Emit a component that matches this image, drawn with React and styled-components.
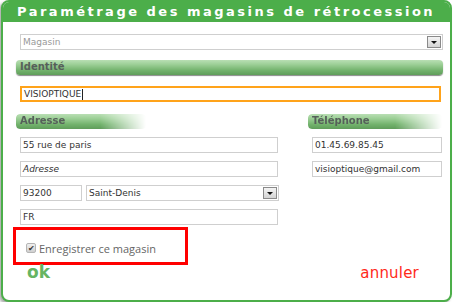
import React from "react";
import styled, { createGlobalStyle } from "styled-components";

const Global = createGlobalStyle`
  body {
    margin: 0;
    background: #fff;
    font-family: "DejaVu Sans", Verdana, sans-serif;
  }
`;

const Panel = styled.div`
  box-sizing: border-box;
  margin-left: 1px;
  width: 451px;
  height: 302px;
  border: 2px solid #4cae4a;
  border-radius: 8px;
  background: #fff;
  box-shadow: -2px 2px 3px #aaa;
  overflow: hidden;
`;

const Header = styled.div`
  height: 20px;
  background: #4cae4a;
  color: #fff;
  font-weight: bold;
  font-size: 13px;
  letter-spacing: 2.5px;
  line-height: 20px;
  padding-left: 14px;
  white-space: nowrap;
`;

const Body = styled.div`
  padding: 12px 8px 0 13px;
  display: flex;
  flex-direction: column;
`;

const Field = styled.div`
  box-sizing: border-box;
  height: ${p => p.$h || 16}px;
  width: ${p => p.$w}px;
  margin-left: ${p => (p.$flush ? 0 : 4)}px;
  border: ${p => (p.$focus ? "2px solid #ffa31a" : "1px solid #cfcfcf")};
  display: flex;
  align-items: center;
  padding-left: 2px;
  font-size: 9px;
  color: ${p => (p.$muted ? "#999" : "#333")};
  font-style: ${p => (p.$italic ? "italic" : "normal")};
  white-space: nowrap;
  flex: none;
`;

const Caret = styled.span`
  width: 1px;
  height: 11px;
  background: #222;
  margin-left: 1px;
`;

const DropBtn = styled.span`
  box-sizing: border-box;
  margin-left: auto;
  margin-right: 1px;
  width: 14px;
  height: 12px;
  border: 1px solid #8a8a8a;
  background: linear-gradient(#f4f4f4, #d4d4d4);
  display: flex;
  align-items: center;
  justify-content: center;
  &::after {
    content: "";
    border-left: 3px solid transparent;
    border-right: 3px solid transparent;
    border-top: 3px solid #111;
  }
`;

const Section = styled.div`
  box-sizing: border-box;
  width: ${p => p.$w}px;
  height: 15px;
  border-radius: 4px;
  background: linear-gradient(#b9dfb4 0%, #9ccf96 30%, #72b26c 70%, #5f9d5a 100%);
  box-shadow: 0 1px 1px #8a8a8a;
  color: #56605a;
  font-weight: bold;
  font-size: 10px;
  line-height: 14px;
  padding-left: 4px;
  flex: none;
  ${p => p.$fade && `
    -webkit-mask-image: linear-gradient(to right, #000 65%, transparent 100%);
    mask-image: linear-gradient(to right, #000 65%, transparent 100%);
  `}
`;

const Gap = styled.div`
  height: ${p => p.$h}px;
  flex: none;
`;

const Columns = styled.div`
  display: flex;
  margin-top: 12px;
`;

const Col = styled.div`
  display: flex;
  flex-direction: column;
  gap: 8px;
  width: ${p => p.$w}px;
`;

const Row = styled.div`
  display: flex;
  gap: 4px;
  margin-left: 4px;
`;

const SaveBox = styled.div`
  box-sizing: border-box;
  margin: 2px 0 0 -3px;
  width: 175px;
  height: 38px;
  border: 3px solid #ff0000;
  display: flex;
  align-items: center;
  padding: 4px 0 0 10px;
  gap: 3px;
  font-family: "Open Sans", sans-serif;
  font-size: 11px;
  color: #666;
`;

const Check = styled.span`
  box-sizing: border-box;
  width: 10px;
  height: 10px;
  border: 1px solid #b5b5b5;
  border-radius: 2px;
  background: linear-gradient(#f0f0f0, #d0d0d0);
  display: flex;
  align-items: center;
  justify-content: center;
  font-size: 8px;
  color: #333;
  line-height: 1;
`;

const Actions = styled.div`
  display: flex;
  justify-content: space-between;
  align-items: baseline;
  padding: 0 23px 0 11px;
  margin-top: -3px;
`;

const Action = styled.span`
  font-size: ${p => (p.$ok ? 17 : 15)}px;
  font-weight: ${p => (p.$ok ? "bold" : "normal")};
  color: ${p => (p.$ok ? "#66b462" : "#ff2a1a")};
  letter-spacing: ${p => (p.$ok ? 0 : 0.2)}px;
`;

export default function App() {
  return (
    <>
      <Global />
      <Panel>
        <Header>Paramétrage des magasins de rétrocession</Header>
        <Body>
          <Field $w={423} $muted>
            Magasin
            <DropBtn />
          </Field>
          <Gap $h={10} />
          <Section $w={427}>Identité</Section>
          <Gap $h={11} />
          <Field $w={421} $focus>
            VISIOPTIQUE<Caret />
          </Field>
          <Columns>
            <Col $w={292}>
              <Section $w={130} $fade>Adresse</Section>
              <Field $w={258}>55 rue de paris</Field>
              <Field $w={258} $italic>Adresse</Field>
              <Row>
                <Field $w={62} $flush>93200</Field>
                <Field $w={193} $flush>
                  Saint-Denis
                  <DropBtn />
                </Field>
              </Row>
              <Field $w={258}>FR</Field>
            </Col>
            <Col $w={134}>
              <Section $w={134} $fade>Téléphone</Section>
              <Field $w={130}>01.45.69.85.45</Field>
              <Field $w={130}>visioptique@gmail.com</Field>
            </Col>
          </Columns>
          <SaveBox>
            <Check>✔</Check>
            Enregistrer ce magasin
          </SaveBox>
          <Actions>
            <Action $ok>ok</Action>
            <Action>annuler</Action>
          </Actions>
        </Body>
      </Panel>
    </>
  );
}
